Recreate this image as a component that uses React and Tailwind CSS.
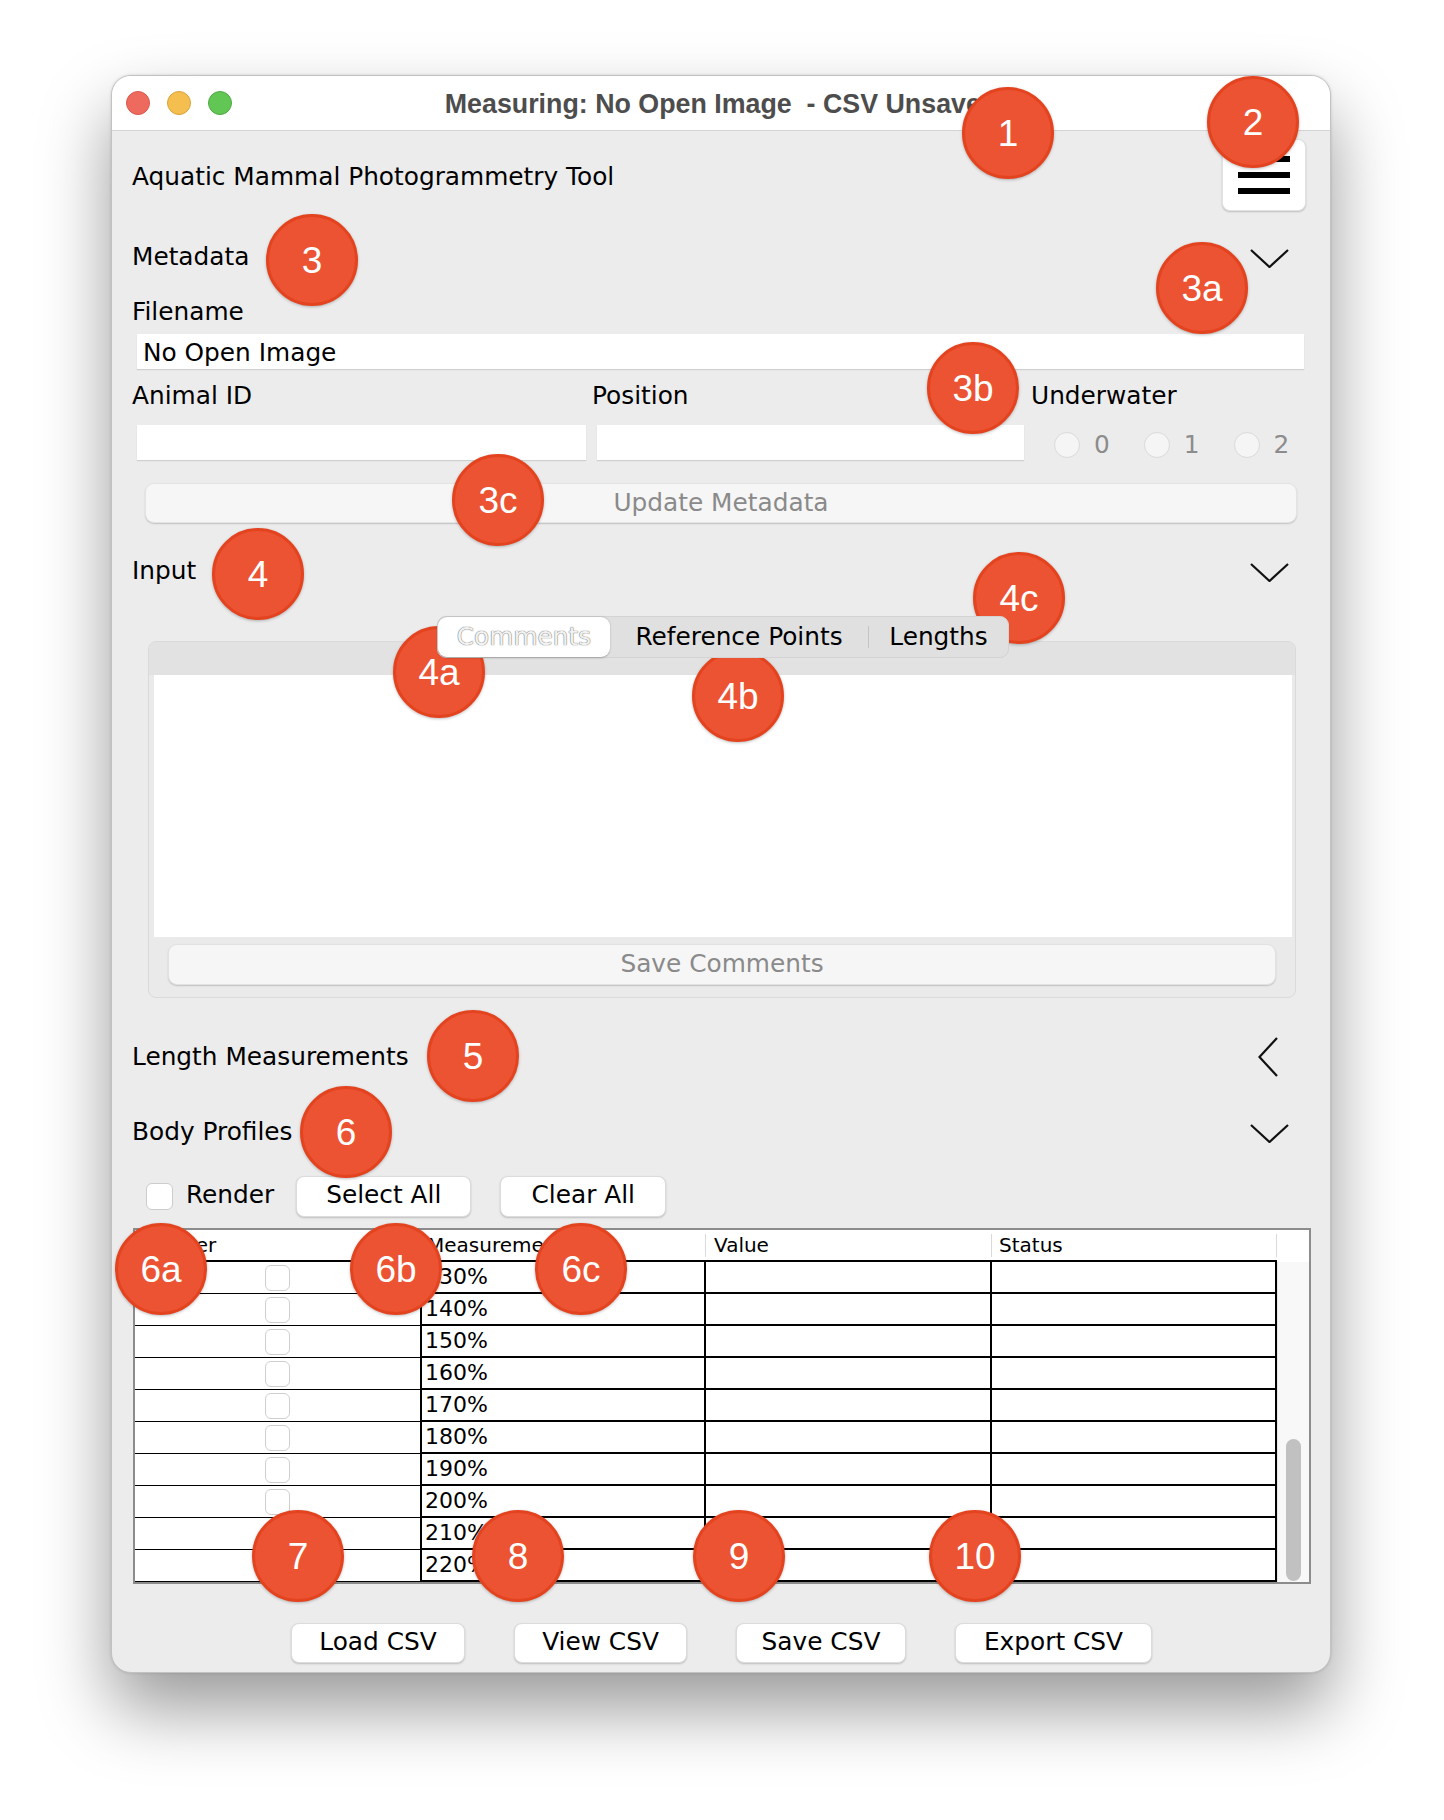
import React from 'react';

const ROWS = ['130%', '140%', '150%', '160%', '170%', '180%', '190%', '200%', '210%', '220%'];

const BADGES = [
  { label: '1', x: 1008, y: 133 },
  { label: '2', x: 1253, y: 122 },
  { label: '3', x: 312, y: 260 },
  { label: '3a', x: 1202, y: 288 },
  { label: '3b', x: 973, y: 388 },
  { label: '3c', x: 498, y: 500 },
  { label: '4', x: 258, y: 574 },
  { label: '4a', x: 439, y: 672 },
  { label: '4b', x: 738, y: 696 },
  { label: '4c', x: 1019, y: 598 },
  { label: '5', x: 473, y: 1056 },
  { label: '6', x: 346, y: 1132 },
  { label: '6a', x: 161, y: 1269 },
  { label: '6b', x: 396, y: 1269 },
  { label: '6c', x: 581, y: 1269 },
  { label: '7', x: 298, y: 1556 },
  { label: '8', x: 518, y: 1556 },
  { label: '9', x: 739, y: 1556 },
  { label: '10', x: 975, y: 1556 },
];

const ChevronDown = () => (
  <svg width="39" height="19" viewBox="0 0 39 19" fill="none">
    <polyline points="1,1 19.5,18 38,1" stroke="#111" strokeWidth="2.2" />
  </svg>
);

const ChevronLeft = () => (
  <svg width="20" height="40" viewBox="0 0 20 40" fill="none">
    <polyline points="19,1 1.5,20 19,39" stroke="#111" strokeWidth="2.2" />
  </svg>
);

const Badge = ({ label, x, y }) => (
  <div
    className="absolute w-[92px] h-[92px] rounded-full bg-[#ec5332] border-[3px] border-[#e4431f] shadow-[0_1px_3px_rgba(0,0,0,0.25)] flex items-center justify-center text-white text-[37px] font-['Liberation_Sans',sans-serif] leading-none"
    style={{ left: x - 46, top: y - 46 }}
  >
    {label}
  </div>
);

const WhiteButton = ({ children, className = '' }) => (
  <div className={`h-full flex items-center justify-center bg-white rounded-[8px] border border-[#dcdcdc] shadow-[0_1px_2px_rgba(0,0,0,0.2)] ${className}`}>
    {children}
  </div>
);

const Radio = ({ label }) => (
  <div className="flex items-center gap-[14px]">
    <div className="w-[26px] h-[26px] rounded-full border border-[#dadada] bg-[#f5f5f5]" />
    <span className="text-[#8c8c8c]">{label}</span>
  </div>
);

export default function App() {
  return (
    <div className="relative w-[1444px] h-[1820px] bg-white overflow-hidden font-['DejaVu_Sans',sans-serif] text-black text-[24.8px] leading-none">
      <div className="pt-[75px] pl-[111px]">
        <div className="w-[1220px] rounded-[20px] border border-[#c2c2c2] bg-[#ececec] overflow-hidden shadow-[0_36px_70px_rgba(0,0,0,0.4),0_0_3px_rgba(0,0,0,0.15)]">
          {/* title bar */}
          <div className="h-[55px] bg-white border-b border-[#d4d4d4] grid grid-cols-[1fr_auto_1fr] items-center">
            <div className="flex items-center gap-[17px] pl-[14px]">
              <div className="w-[24px] h-[24px] rounded-full bg-[#ee6a5f] border border-[#d9574c]" />
              <div className="w-[24px] h-[24px] rounded-full bg-[#f5bf4f] border border-[#d9a23c]" />
              <div className="w-[24px] h-[24px] rounded-full bg-[#62c655] border border-[#4ea843]" />
            </div>
            <div className="font-['Liberation_Sans',sans-serif] font-bold text-[26.8px] text-[#4d4d4d] whitespace-pre pt-[2px]">
              Measuring: No Open Image  - CSV Unsaved
            </div>
            <div />
          </div>

          <div className="pl-[20px] pr-[19px] pb-[9px]">
            {/* app title + menu */}
            <div className="mt-[8px] h-[72px] flex items-center justify-between">
              <span className="pt-[4px]">Aquatic Mammal Photogrammetry Tool</span>
              <div className="mr-[5px] w-[84px] h-[72px] bg-white rounded-[8px] shadow-[0_1px_2px_rgba(0,0,0,0.2)] border border-[#e2e2e2] flex flex-col items-center justify-center gap-[10px]">
                <div className="w-[52px] h-[6px] bg-black" />
                <div className="w-[52px] h-[6px] bg-black" />
                <div className="w-[52px] h-[6px] bg-black" />
              </div>
            </div>

            {/* Metadata */}
            <div className="mt-[26px] h-[40px] flex items-center justify-between">
              <span>Metadata</span>
              <div className="mr-[22px] pt-[3px]"><ChevronDown /></div>
            </div>
            <div className="mt-[19px] h-[30px] flex items-center pt-[2px]">Filename</div>
            <div className="mt-[8px] h-[35px] ml-[5px] mr-[7px] bg-white shadow-[0_1px_1px_rgba(0,0,0,0.12)] flex items-center pl-[6px] pt-[4px]">
              No Open Image
            </div>
            <div className="mt-[11px] h-[30px] flex items-center pt-[2px]">
              <div className="w-[460px]">Animal ID</div>
              <div className="w-[439px]">Position</div>
              <div>Underwater</div>
            </div>
            <div className="mt-[15px] h-[35px] flex items-center">
              <div className="ml-[5px] w-[449px] h-full bg-white shadow-[0_1px_1px_rgba(0,0,0,0.12)]" />
              <div className="ml-[11px] w-[427px] h-full bg-white shadow-[0_1px_1px_rgba(0,0,0,0.12)]" />
              <div className="ml-[30px] mt-[5px] flex items-center gap-[34px]">
                <Radio label="0" />
                <Radio label="1" />
                <Radio label="2" />
              </div>
            </div>
            <div className="mt-[23px] h-[40px] ml-[13px] mr-[14px] rounded-[9px] bg-[#f6f6f6] border border-[#e4e4e4] shadow-[0_1px_1.5px_rgba(0,0,0,0.18)] flex items-center justify-center text-[#8a8a8a]">
              Update Metadata
            </div>

            {/* Input */}
            <div className="mt-[28px] h-[40px] flex items-center justify-between">
              <span>Input</span>
              <div className="mr-[22px] pt-[3px]"><ChevronDown /></div>
            </div>
            <div className="mt-[25px] ml-[305px] w-[572px] h-[42px] relative z-10 flex items-center rounded-[9px] bg-[#e0e0e0] border border-[#d3d3d3]">
              <div className="w-[172px] h-full bg-white rounded-[9px] shadow-[0_0.5px_2px_rgba(0,0,0,0.25)] flex items-center justify-center text-[#f2f2f2] [text-shadow:0_0_1px_#6f6f6f,0_0_1px_#6f6f6f]">
                Comments
              </div>
              <div className="w-[258px] flex items-center justify-center">Reference Points</div>
              <div className="w-px h-[22px] bg-[#c4c4c4]" />
              <div className="flex-1 flex items-center justify-center">Lengths</div>
            </div>
            <div className="-mt-[17px] ml-[16px] mr-[15px] h-[357px] rounded-[8px] bg-[#eaeaea] border border-[#dadada] overflow-hidden flex flex-col">
              <div className="h-[33px] bg-[#e2e2e2]" />
              <div className="ml-[5px] mr-[3px] h-[262px] bg-white" />
              <div className="mt-[7px] mx-[19px] h-[41px] rounded-[9px] bg-[#f6f6f6] border border-[#e2e2e2] shadow-[0_1px_1.5px_rgba(0,0,0,0.18)] flex items-center justify-center text-[#8a8a8a]">
                Save Comments
              </div>
            </div>

            {/* Length Measurements */}
            <div className="mt-[39px] h-[40px] flex items-center justify-between">
              <span>Length Measurements</span>
              <div className="mr-[33px]"><ChevronLeft /></div>
            </div>

            {/* Body Profiles */}
            <div className="mt-[35px] h-[40px] flex items-center justify-between">
              <span>Body Profiles</span>
              <div className="mr-[22px] pt-[3px]"><ChevronDown /></div>
            </div>
            <div className="mt-[24px] h-[41px] flex items-center">
              <div className="ml-[14px] w-[27px] h-[27px] rounded-[6px] border border-[#cccccc] bg-white" />
              <span className="ml-[13px] pb-[2px]">Render</span>
              <WhiteButton className="ml-[22px] w-[175px] pb-[2px]">Select All</WhiteButton>
              <WhiteButton className="ml-[29px] w-[166px] pb-[2px]">Clear All</WhiteButton>
            </div>

            {/* table */}
            <div className="mt-[11px] ml-[1px] w-[1178px] h-[356px] border-2 border-[#8c8c8c] bg-white flex flex-col">
              <div className="h-[32px] flex text-[20px]">
                {[
                  ['Render', 'w-[285px] pl-[10px]'],
                  ['Measurement', 'w-[286px] pl-[7px]'],
                  ['Value', 'w-[286px] pl-[8px]'],
                  ['Status', 'w-[285px] pl-[7px]'],
                ].map(([h, cls]) => (
                  <div key={h} className={`${cls} h-full border-b-2 border-black flex items-center justify-between`}>
                    <span>{h}</span>
                    <div className="w-px h-[23px] bg-[#dadada]" />
                  </div>
                ))}
                <div className="w-[32px]" />
              </div>
              <div className="flex">
                <div className="flex flex-col">
                  {ROWS.map((r) => (
                    <div key={r} className="h-[32px] flex text-[22px]">
                      <div className="w-[285px] h-full border-b border-black flex items-center justify-center">
                        <div className="w-[25px] h-[26px] rounded-[6px] border border-[#cfcfcf] bg-white" />
                      </div>
                      <div className="w-[286px] h-full border-l-2 border-r-2 border-b-2 border-black flex items-center pl-[3px]">{r}</div>
                      <div className="w-[286px] h-full border-r-2 border-b-2 border-black" />
                      <div className="w-[285px] h-full border-r-2 border-b-2 border-black" />
                    </div>
                  ))}
                </div>
                <div className="w-[32px] h-[320px] bg-[#f8f8f8] border-l border-[#e6e6e6] flex flex-col justify-end items-center pb-[1px]">
                  <div className="w-[15px] h-[142px] rounded-full bg-[#c1c1c1]" />
                </div>
              </div>
            </div>

            {/* csv buttons */}
            <div className="mt-[39px] h-[40px] flex justify-center gap-[49px]">
              <WhiteButton className="w-[174px] pb-[1px]">Load CSV</WhiteButton>
              <WhiteButton className="w-[173px] pb-[1px]">View CSV</WhiteButton>
              <WhiteButton className="w-[170px] pb-[1px]">Save CSV</WhiteButton>
              <WhiteButton className="w-[197px] pb-[1px]">Export CSV</WhiteButton>
            </div>
          </div>
        </div>
      </div>

      {BADGES.map((b) => (
        <Badge key={b.label} {...b} />
      ))}
    </div>
  );
}
